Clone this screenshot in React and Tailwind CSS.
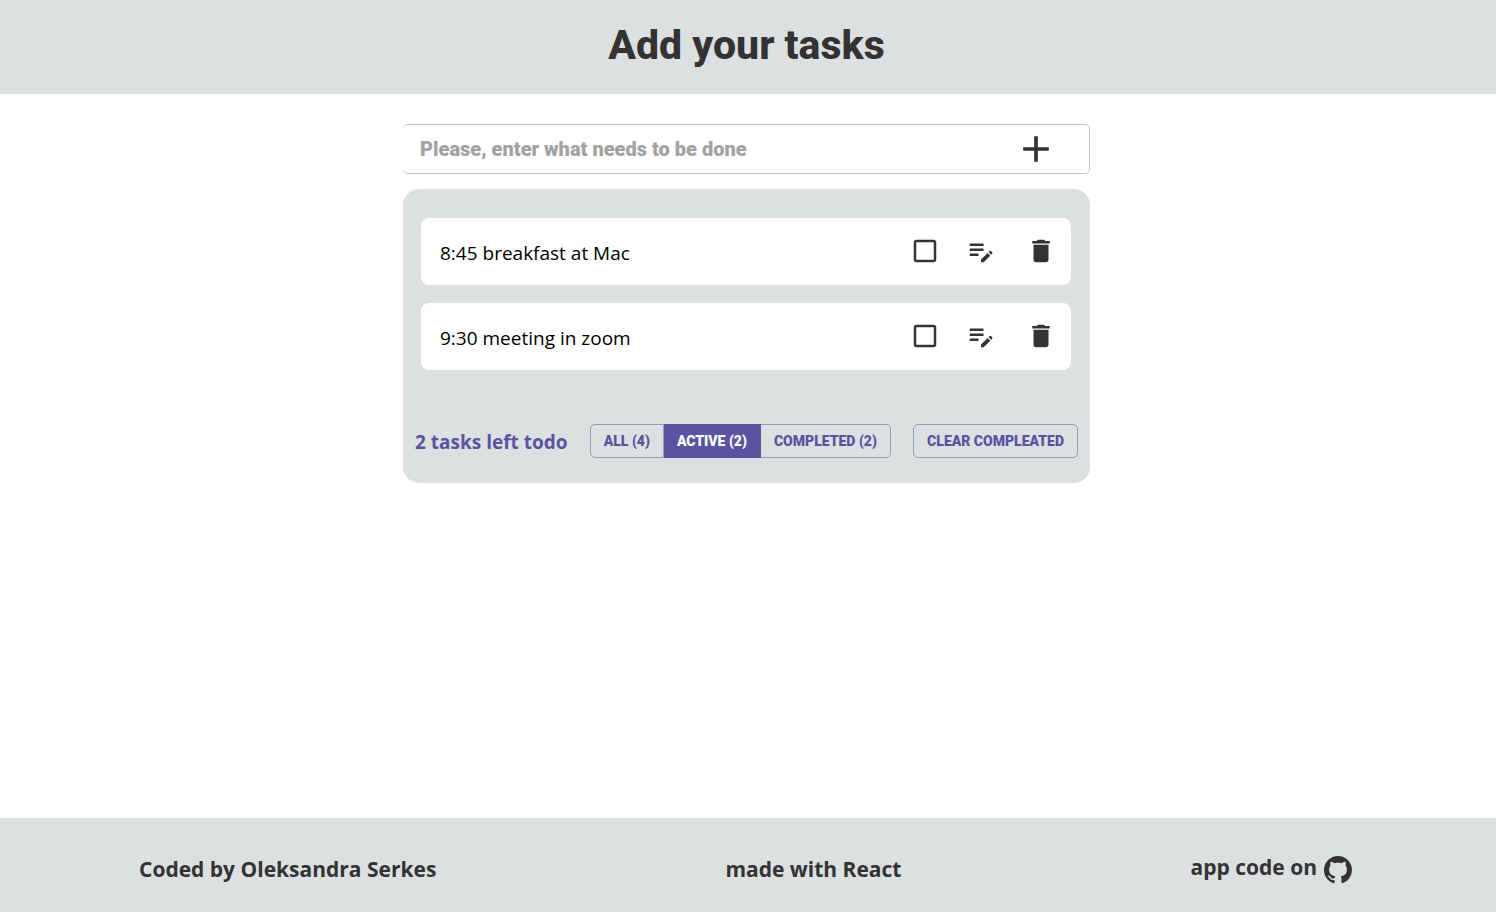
import { useState } from "react";
import { BsGithub } from "react-icons/bs";
import { MdAdd, MdCheckBox, MdCheckBoxOutlineBlank, MdDelete, MdEditNote } from "react-icons/md";

const initialTasks = [
  { id: 1, text: "8:45 breakfast at Mac", done: false },
  { id: 2, text: "9:30 meeting in zoom", done: false },
];

const filters = [
  { id: "all", label: "ALL (4)" },
  { id: "active", label: "ACTIVE (2)" },
  { id: "completed", label: "COMPLETED (2)" },
];

function TaskRow({ task, onToggle, onDelete }) {
  return (
    <li className="flex h-[67px] items-center rounded-lg bg-white pr-[15px] pl-[19px]">
      <span className="grow pt-1 text-[19px] text-black">{task.text}</span>
      <div className="flex items-center pb-px text-[#333333]">
        <label className="cursor-pointer">
          <input
            type="checkbox"
            checked={task.done}
            onChange={() => onToggle(task.id)}
            aria-label={`Complete ${task.text}`}
            className="sr-only"
          />
          {task.done ? (
            <MdCheckBox className="size-[30px]" />
          ) : (
            <MdCheckBoxOutlineBlank className="size-[30px]" />
          )}
        </label>
        <button type="button" aria-label={`Edit ${task.text}`} className="ml-[26px] cursor-pointer">
          <MdEditNote className="size-[30px]" />
        </button>
        <button
          type="button"
          aria-label={`Delete ${task.text}`}
          onClick={() => onDelete(task.id)}
          className="ml-[30px] cursor-pointer"
        >
          <MdDelete className="size-[30px]" />
        </button>
      </div>
    </li>
  );
}

export default function App() {
  const [tasks, setTasks] = useState(initialTasks);
  const [filter, setFilter] = useState("active");

  const toggle = (id) =>
    setTasks(tasks.map((t) => (t.id === id ? { ...t, done: !t.done } : t)));
  const remove = (id) => setTasks(tasks.filter((t) => t.id !== id));

  return (
    <div className="flex min-h-screen flex-col bg-white font-['Open_Sans','Noto_Sans',sans-serif] text-[#333333]">
      <header className="flex h-[94px] justify-center bg-[#dce0e1] pt-[21px] pr-[3px]">
        <h1 className="font-[Roboto,sans-serif] text-[41px] leading-[48px] font-extrabold">Add your tasks</h1>
      </header>

      <main className="grow pt-[30px] pr-[3px]">
        <div className="mx-auto w-full max-w-[687px]">
          <form
            onSubmit={(e) => e.preventDefault()}
            className="flex h-[50px] items-center rounded-[5px] border border-l-0 border-[#c4c4c4] pr-[31px] pl-[17px]"
          >
            <input
              type="text"
              aria-label="New task"
              placeholder="Please, enter what needs to be done"
              className="grow bg-transparent font-[Roboto,sans-serif] text-xl font-black outline-none placeholder:text-[#a2a2a2]"
            />
            <button type="submit" aria-label="Add task" className="cursor-pointer">
              <MdAdd className="size-11" />
            </button>
          </form>

          <section className="mt-[15px] rounded-2xl bg-[#dce0e1] pt-[29px] pb-[25px]">
            <ul className="flex flex-col gap-[18px] pr-[19px] pl-[18px]">
              {tasks.map((task) => (
                <TaskRow key={task.id} task={task} onToggle={toggle} onDelete={remove} />
              ))}
            </ul>

            <div className="mt-[54px] flex h-[34px] items-center justify-between px-3 text-[#5953a2]">
              <p className="pt-0.5 text-[19px] font-bold">2 tasks left todo</p>
              <div className="flex h-full font-[Roboto,sans-serif] text-sm font-black">
                {filters.map((f) => (
                  <button
                    key={f.id}
                    type="button"
                    aria-pressed={filter === f.id}
                    onClick={() => setFilter(f.id)}
                    className={`cursor-pointer border-y border-r px-[13px] first:rounded-l-[5px] first:border-l last:rounded-r-[5px] ${
                      filter === f.id
                        ? "border-[#5953a2] bg-[#5953a2] text-white"
                        : "border-[#9a97c6]"
                    }`}
                  >
                    {f.label}
                  </button>
                ))}
              </div>
              <button
                type="button"
                className="h-full cursor-pointer rounded-[5px] border border-[#9a97c6] px-[13px] font-[Roboto,sans-serif] text-sm font-black"
              >
                CLEAR COMPLEATED
              </button>
            </div>
          </section>
        </div>
      </main>

      <footer className="flex h-[94px] items-center justify-between bg-[#dce0e1] pt-[10px] pr-36 pl-[139px] text-[21px] font-bold">
        <p>Coded by Oleksandra Serkes</p>
        <p>made with React</p>
        <a href="#source" className="flex items-center gap-[7px]">
          <span className="pb-1">app code on</span>
          <BsGithub className="size-7" />
        </a>
      </footer>
    </div>
  );
}
